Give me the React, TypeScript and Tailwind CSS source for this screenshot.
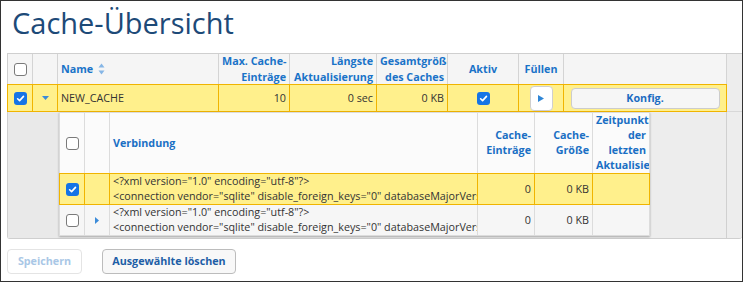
import React from "react";

// Cache overview: a parent grid with one expanded row showing its connections.

function Check({ on }: { on?: boolean }) {
  if (on)
    return (
      <span className="flex h-[13px] w-[13px] items-center justify-center rounded-[3px] bg-[#1574e6]">
        <svg viewBox="0 0 10 10" className="h-[9px] w-[9px]">
          <path
            d="M1.8 5.3 4 7.4 8.3 2.6"
            fill="none"
            stroke="#fff"
            strokeWidth="1.8"
            strokeLinecap="round"
            strokeLinejoin="round"
          />
        </svg>
      </span>
    );
  return <span className="block h-[13px] w-[13px] rounded-[3px] border border-[#7a7a7a] bg-white" />;
}

function SortIcon() {
  return (
    <svg viewBox="0 0 7 12" className="h-[12px] w-[7px]">
      <path d="M3.5 0.5 6.5 4.5H0.5Z" fill="#86b6e6" />
      <path d="M3.5 11.5 6.5 7.5H0.5Z" fill="#86b6e6" />
    </svg>
  );
}

const XML1 = '<?xml version="1.0" encoding="utf-8"?>';
const XML2 =
  '<connection vendor="sqlite" disable_foreign_keys="0" databaseMajorVersion="3" databaseMinorVersion="0">';

export default function App() {
  return (
    <div className="h-[284px] w-[745px] bg-white font-['Open_Sans',sans-serif] text-[10.75px] text-[#333]">
      <div className="h-[282px] w-[743px] border border-[#333]">
        <h1 className="pl-[11px] pt-[7px] text-[29px] font-normal leading-[29px] text-[#1d4a78]">
          Cache-Übersicht
        </h1>

        <div className="ml-[6px] mt-[16px] w-[735px] rounded-b-[3px] border-x-0 border-b border-l border-t border-[#cfcfcf] bg-[#ededed]">
          {/* header */}
          <div className="flex h-[30px] bg-[#f5f5f5] font-bold text-[#1a73c8]">
            <div className="flex w-[25px] items-center justify-center border-r border-[#d4d4d4]">
              <Check />
            </div>
            <div className="w-[25px] border-r border-[#d4d4d4]" />
            <div className="flex w-[161px] items-center gap-[5px] border-r border-[#d4d4d4] px-[3px]">
              Name <SortIcon />
            </div>
            <div className="flex w-[71px] flex-col justify-center overflow-hidden whitespace-nowrap border-r border-[#d4d4d4] px-[3px] text-right leading-[16px]">
              <div>Max. Cache-</div>
              <div>Einträge</div>
            </div>
            <div className="flex w-[87px] flex-col justify-center overflow-hidden whitespace-nowrap border-r border-[#d4d4d4] px-[3px] text-right leading-[16px]">
              <div>Längste</div>
              <div>Aktualisierung</div>
            </div>
            <div className="flex w-[71px] flex-col justify-center overflow-hidden whitespace-nowrap border-r border-[#d4d4d4] px-[3px] text-right leading-[16px]">
              <div>Gesamtgröße</div>
              <div>des Caches</div>
            </div>
            <div className="flex w-[71px] items-center justify-center border-r border-[#d4d4d4]">Aktiv</div>
            <div className="flex w-[45px] items-center justify-center border-r border-[#d4d4d4]">Füllen</div>
            <div className="w-[163px] border-r border-[#d4d4d4]" />
            <div className="flex-1 bg-[#ededed]" />
          </div>

          {/* selected cache row */}
          <div className="-ml-px flex h-[28px]">
            <div className="flex border-y border-l border-[#f0b400] bg-[#fff08c]">
              <div className="flex w-[25px] items-center justify-center border-r border-[#f0b400]">
                <Check on />
              </div>
              <div className="flex w-[25px] items-center justify-center border-r border-[#f0b400]">
                <svg viewBox="0 0 7 4" className="h-[4px] w-[7px]">
                  <path d="M0 0H7L3.5 4Z" fill="#3b8bd9" />
                </svg>
              </div>
              <div className="flex w-[161px] items-center border-r border-[#f0b400] px-[3px]">NEW_CACHE</div>
              <div className="flex w-[71px] items-center justify-end border-r border-[#f0b400] px-[3px]">10</div>
              <div className="flex w-[87px] items-center justify-end border-r border-[#f0b400] px-[3px]">0 sec</div>
              <div className="flex w-[71px] items-center justify-end border-r border-[#f0b400] px-[3px]">0 KB</div>
              <div className="flex w-[71px] items-center justify-center border-r border-[#f0b400]">
                <Check on />
              </div>
              <div className="flex w-[45px] items-center justify-center border-r border-[#f0b400]">
                <button className="flex h-[25px] w-[23px] items-center justify-center rounded-[4px] border border-[#cfcfcf] bg-white">
                  <svg viewBox="0 0 6 7" className="h-[7px] w-[6px]">
                    <path d="M0 0 6 3.5 0 7Z" fill="#2f86d6" />
                  </svg>
                </button>
              </div>
              <div className="flex w-[163px] items-center justify-center border-r border-[#f0b400]">
                <button className="h-[21px] w-[149px] rounded-[4px] border border-[#cccccc] bg-[#f6f6f6] font-bold text-[#1c6cc2]">
                  Konfig.
                </button>
              </div>
            </div>
            <div className="flex-1 border-b border-[#d8d8d8]" />
          </div>

          {/* expanded detail */}
          <div className="flex h-[126px]">
            <div className="w-[51px] bg-[#e9e9e9]" />
            <div className="w-[591px] self-start border-l border-t border-[#dcdcdc] bg-white shadow-[0_1px_2px_rgba(0,0,0,0.3)]">
              <div className="flex h-[60px] bg-[#fbfbfb] font-bold text-[#1a6fc4]">
                <div className="flex w-[25px] items-center justify-center border-r border-[#dcdcdc]">
                  <Check />
                </div>
                <div className="w-[25px] border-r border-[#dcdcdc]" />
                <div className="flex w-[368px] items-center border-r border-[#dcdcdc] px-[3px]">Verbindung</div>
                <div className="flex w-[57px] flex-col justify-center whitespace-nowrap border-r border-[#dcdcdc] px-[3px] text-right leading-[15px]">
                  <div>Cache-</div>
                  <div>Einträge</div>
                </div>
                <div className="flex w-[58px] flex-col justify-center whitespace-nowrap border-r border-[#dcdcdc] px-[3px] text-right leading-[15px]">
                  <div>Cache-</div>
                  <div>Größe</div>
                </div>
                <div className="flex w-[57px] flex-col justify-center overflow-hidden whitespace-nowrap border-r border-[#dcdcdc] px-[3px] text-right leading-[15px]">
                  <div>Zeitpunkt</div>
                  <div>der</div>
                  <div>letzten</div>
                  <div>Aktualisierung</div>
                </div>
              </div>

              <div className="-ml-px flex h-[32px] border-y border-l border-[#f0b400] bg-[#fff08c]">
                <div className="flex w-[25px] items-center justify-center border-r border-[#f0b400]">
                  <Check on />
                </div>
                <div className="w-[25px] border-r border-[#f0b400]" />
                <div className="flex w-[368px] flex-col justify-center overflow-hidden whitespace-nowrap border-r border-[#f0b400] px-[3px] leading-[15px]">
                  <div>{XML1}</div>
                  <div>{XML2}</div>
                </div>
                <div className="flex w-[57px] items-center justify-end border-r border-[#f0b400] px-[3px]">0</div>
                <div className="flex w-[58px] items-center justify-end border-r border-[#f0b400] px-[3px]">0 KB</div>
                <div className="w-[57px] border-r border-[#f0b400]" />
              </div>

              <div className="flex h-[31px] border-b border-[#dcdcdc] bg-[#f6f6f6]">
                <div className="flex w-[25px] items-center justify-center border-r border-[#dcdcdc]">
                  <Check />
                </div>
                <div className="flex w-[25px] items-center justify-center border-r border-[#dcdcdc]">
                  <svg viewBox="0 0 4 7" className="h-[7px] w-[4px]">
                    <path d="M0 0 4 3.5 0 7Z" fill="#3b8bd9" />
                  </svg>
                </div>
                <div className="flex w-[368px] flex-col justify-center overflow-hidden whitespace-nowrap border-r border-[#dcdcdc] px-[3px] leading-[15px]">
                  <div>{XML1}</div>
                  <div>{XML2}</div>
                </div>
                <div className="flex w-[57px] items-center justify-end border-r border-[#dcdcdc] px-[3px]">0</div>
                <div className="flex w-[58px] items-center justify-end border-r border-[#dcdcdc] px-[3px]">0 KB</div>
                <div className="w-[57px] border-r border-[#dcdcdc]" />
              </div>
            </div>
            <div className="w-[76px]" />
            <div className="flex-1 border-l border-[#d0d0d0]" />
          </div>
        </div>

        <div className="ml-[6px] mt-[10px] flex gap-[20px] font-bold">
          <button className="h-[25px] w-[75px] rounded-[4px] border border-[#e4e4e4] bg-white text-[#a9c7e6]">
            Speichern
          </button>
          <button className="h-[25px] w-[134px] rounded-[4px] border border-[#bcbcbc] bg-[#f8f8f8] text-[#1d5ea6]">
            Ausgewählte löschen
          </button>
        </div>
      </div>
    </div>
  );
}
